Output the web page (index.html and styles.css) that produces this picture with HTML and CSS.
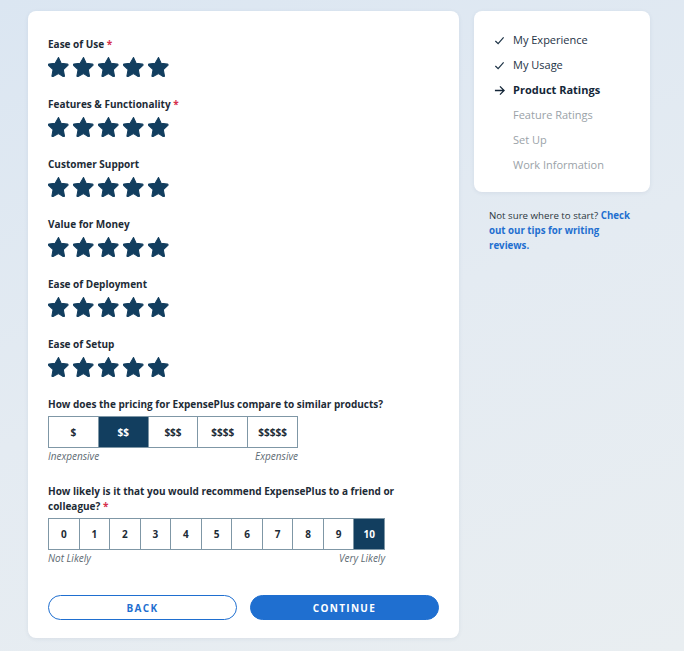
FILE: index.html
```html
<!DOCTYPE html>
<html lang="en">
<head>
  <meta charset="UTF-8" />
  <meta name="viewport" content="width=device-width, initial-scale=1" />
  <title>Write a Review - ExpensePlus</title>
  <link rel="stylesheet" href="styles.css">
</head>
<body>
  <svg width="0" height="0" style="position:absolute">
    <defs>
      <symbol id="star" viewBox="0 0 24 24">
        <path d="M12 1.8l3.1 6.6 7.1.9c.7.1 1 .9.5 1.4l-5.2 4.9 1.3 7.1c.1.7-.6 1.2-1.2.9L12 20.1l-6.3 3.4c-.6.3-1.3-.2-1.2-.9l1.3-7.1-5.2-4.9c-.5-.5-.2-1.3.5-1.4l7.1-.9z" fill="currentColor" stroke="currentColor" stroke-width="1.2" stroke-linejoin="round"/>
      </symbol>
    </defs>
  </svg>

  <div class="page">
    <main class="card form-card">
      <div class="rating">
        <div class="label">Ease of Use <span class="req">*</span></div>
        <div class="stars">
          <svg class="star"><use href="#star"/></svg><svg class="star"><use href="#star"/></svg><svg class="star"><use href="#star"/></svg><svg class="star"><use href="#star"/></svg><svg class="star"><use href="#star"/></svg>
        </div>
      </div>
      <div class="rating">
        <div class="label">Features &amp; Functionality <span class="req">*</span></div>
        <div class="stars">
          <svg class="star"><use href="#star"/></svg><svg class="star"><use href="#star"/></svg><svg class="star"><use href="#star"/></svg><svg class="star"><use href="#star"/></svg><svg class="star"><use href="#star"/></svg>
        </div>
      </div>
      <div class="rating">
        <div class="label">Customer Support</div>
        <div class="stars">
          <svg class="star"><use href="#star"/></svg><svg class="star"><use href="#star"/></svg><svg class="star"><use href="#star"/></svg><svg class="star"><use href="#star"/></svg><svg class="star"><use href="#star"/></svg>
        </div>
      </div>
      <div class="rating">
        <div class="label">Value for Money</div>
        <div class="stars">
          <svg class="star"><use href="#star"/></svg><svg class="star"><use href="#star"/></svg><svg class="star"><use href="#star"/></svg><svg class="star"><use href="#star"/></svg><svg class="star"><use href="#star"/></svg>
        </div>
      </div>
      <div class="rating">
        <div class="label">Ease of Deployment</div>
        <div class="stars">
          <svg class="star"><use href="#star"/></svg><svg class="star"><use href="#star"/></svg><svg class="star"><use href="#star"/></svg><svg class="star"><use href="#star"/></svg><svg class="star"><use href="#star"/></svg>
        </div>
      </div>
      <div class="rating">
        <div class="label">Ease of Setup</div>
        <div class="stars">
          <svg class="star"><use href="#star"/></svg><svg class="star"><use href="#star"/></svg><svg class="star"><use href="#star"/></svg><svg class="star"><use href="#star"/></svg><svg class="star"><use href="#star"/></svg>
        </div>
      </div>

      <div class="question pricing">
        <div class="label">How does the pricing for ExpensePlus compare to similar products?</div>
        <div class="scale scale-price">
          <div class="cell">$</div>
          <div class="cell selected">$$</div>
          <div class="cell">$$$</div>
          <div class="cell">$$$$</div>
          <div class="cell">$$$$$</div>
        </div>
        <div class="scale-labels scale-price-labels">
          <span>Inexpensive</span>
          <span>Expensive</span>
        </div>
      </div>

      <div class="question nps">
        <div class="label nps-label">How likely is it that you would recommend ExpensePlus to a friend or colleague? <span class="req">*</span></div>
        <div class="scale scale-nps">
          <div class="cell">0</div>
          <div class="cell">1</div>
          <div class="cell">2</div>
          <div class="cell">3</div>
          <div class="cell">4</div>
          <div class="cell">5</div>
          <div class="cell">6</div>
          <div class="cell">7</div>
          <div class="cell">8</div>
          <div class="cell">9</div>
          <div class="cell selected">10</div>
        </div>
        <div class="scale-labels scale-nps-labels">
          <span>Not Likely</span>
          <span>Very Likely</span>
        </div>
      </div>

      <div class="actions">
        <button class="btn btn-back">BACK</button>
        <button class="btn btn-continue">CONTINUE</button>
      </div>
    </main>

    <aside class="side">
      <div class="card steps">
        <div class="step done">
          <svg class="step-icon" viewBox="0 0 12 12"><path d="M1.5 6.5l3 3 6-7" fill="none" stroke="currentColor" stroke-width="1.3"/></svg>
          My Experience
        </div>
        <div class="step done">
          <svg class="step-icon" viewBox="0 0 12 12"><path d="M1.5 6.5l3 3 6-7" fill="none" stroke="currentColor" stroke-width="1.3"/></svg>
          My Usage
        </div>
        <div class="step current">
          <svg class="step-icon" viewBox="0 0 12 12"><path d="M1 6h10M6.5 1.5L11 6l-4.5 4.5" fill="none" stroke="currentColor" stroke-width="1.4"/></svg>
          Product Ratings
        </div>
        <div class="step todo">Feature Ratings</div>
        <div class="step todo">Set Up</div>
        <div class="step todo">Work Information</div>
      </div>
      <p class="tips">Not sure where to start? <a href="#">Check out our tips for writing reviews.</a></p>
    </aside>
  </div>
</body>
</html>
```

FILE: styles.css
```css
body {
    margin: 0;
    font-family: 'Open Sans', 'Noto Sans', sans-serif;
    color: #1b2a38;
    background: linear-gradient(160deg, #dbe6f2 0%, #e4ebf2 50%, #e9eef1 100%);
    min-height: 651px;
}

.page {
    display: flex;
    align-items: flex-start;
    gap: 15px;
    padding: 11px 0 0 28px;
}

.card {
    background: #fff;
    border-radius: 8px;
    box-shadow: 0 1px 4px rgba(40, 70, 100, 0.08);
}

.form-card {
    width: 391px;
    padding: 26px 20px 18px 20px;
}

.label {
    font-size: 10px;
    font-weight: 700;
    line-height: 15px;
    color: #1d2b36;
}

.nps-label {
    width: 350px;
}

.req {
    color: #d6304c;
}

.rating {
    margin-bottom: 20px;
}

.stars {
    display: flex;
    gap: 4px;
    margin-top: 4px;
    height: 21px;
}

.star {
    width: 21px;
    height: 21px;
    color: #123e5f;
}

.question.pricing {
    margin-top: 20px;
}

.scale {
    display: flex;
    margin-top: 4px;
    border: 1px solid #7f97a6;
    height: 30px;
    box-sizing: content-box;
}

.scale .cell {
    display: flex;
    align-items: center;
    justify-content: center;
    font-size: 10px;
    font-weight: 700;
    color: #1d2b36;
    border-left: 1px solid #7f97a6;
}

.scale .cell:first-child {
    border-left: none;
}

.scale .cell.selected {
    background: #123e5f;
    color: #fff;
}

.scale-price {
    width: 248px;
}

.scale-price .cell {
    width: 50px;
}

.scale-nps {
    width: 335px;
}

.scale-nps .cell {
    flex: 1;
}

.scale-labels {
    display: flex;
    justify-content: space-between;
    font-size: 10px;
    font-style: italic;
    color: #5d6a73;
    line-height: 12px;
    margin-top: 2px;
}

.scale-price-labels {
    width: 250px;
}

.scale-nps-labels {
    width: 337px;
}

.question.nps {
    margin-top: 22px;
}

.actions {
    display: flex;
    gap: 13px;
    margin-top: 31px;
}

.btn {
    flex: 1;
    height: 25px;
    border-radius: 13px;
    font-family: 'Open Sans', 'Noto Sans', sans-serif;
    font-size: 10px;
    font-weight: 700;
    letter-spacing: 1.3px;
    cursor: pointer;
}

.btn-back {
    background: #fff;
    border: 1px solid #1f6fd0;
    color: #1f6fd0;
}

.btn-continue {
    background: #1f6fd0;
    border: 1px solid #1f6fd0;
    color: #fff;
}

.side {
    width: 176px;
}

.steps {
    padding: 16px 0 23px 20px;
    height: 142px;
}

.step {
    display: flex;
    align-items: center;
    height: 25px;
    font-size: 11px;
    padding-left: 19px;
    position: relative;
}

.step-icon {
    position: absolute;
    left: 0;
    top: 8px;
    width: 11px;
    height: 11px;
}

.step.done {
    color: #1d3346;
}

.step.current {
    font-weight: 700;
    color: #142638;
}

.step.todo {
    color: #9aa2a8;
}

.tips {
    margin: 16px 0 0 15px;
    font-size: 9.7px;
    line-height: 15px;
    color: #2b3640;
    width: 152px;
}

.tips a {
    color: #1f6fd0;
    font-weight: 700;
    text-decoration: none;
}
```
